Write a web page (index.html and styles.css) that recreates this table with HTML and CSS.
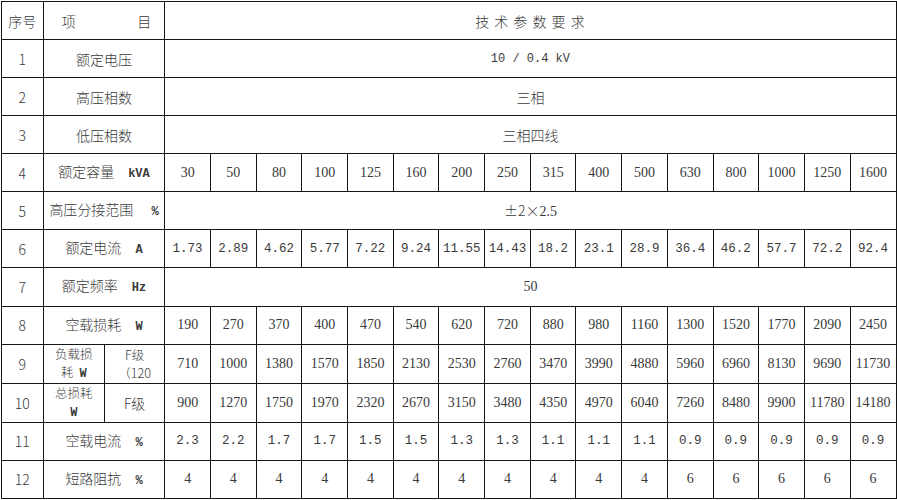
FILE: index.html
```html
<!DOCTYPE html>
<html lang="zh-CN">
<head>
<meta charset="utf-8">
<title>技术参数要求</title>
<link rel="stylesheet" href="styles.css">
</head>
<body>
<table class="spec">
  <colgroup>
    <col class="c-no"><col class="c-item-a"><col class="c-item-b">
    <col class="c-d"><col class="c-d"><col class="c-d"><col class="c-d">
    <col class="c-d"><col class="c-d"><col class="c-d"><col class="c-d">
    <col class="c-d"><col class="c-d"><col class="c-d"><col class="c-d">
    <col class="c-d"><col class="c-d"><col class="c-d"><col class="c-d">
  </colgroup>
  <tbody>
    <tr>
      <td class="no">序号</td>
      <td colspan="2" class="label"><div class="item-head"><span>项</span><span>目</span></div></td>
      <td colspan="16" class="title">技 术 参 数 要 求</td>
    </tr>
    <tr>
      <td class="no">1</td>
      <td colspan="2" class="label">额定电压</td>
      <td colspan="16" class="mono">10 / 0.4 kV</td>
    </tr>
    <tr>
      <td class="no">2</td>
      <td colspan="2" class="label">高压相数</td>
      <td colspan="16" class="cjk">三相</td>
    </tr>
    <tr>
      <td class="no">3</td>
      <td colspan="2" class="label">低压相数</td>
      <td colspan="16" class="cjk">三相四线</td>
    </tr>
    <tr>
      <td class="no">4</td>
      <td colspan="2" class="label">额定容量<span class="u">kVA</span></td>
      <td>30</td><td>50</td><td>80</td><td>100</td><td>125</td><td>160</td><td>200</td><td>250</td>
      <td>315</td><td>400</td><td>500</td><td>630</td><td>800</td><td>1000</td><td>1250</td><td>1600</td>
    </tr>
    <tr>
      <td class="no">5</td>
      <td colspan="2" class="label">高压分接范围<span class="u wide">%</span></td>
      <td colspan="16"><span class="cjk">±2×</span>2.5</td>
    </tr>
    <tr class="mono-row">
      <td class="no">6</td>
      <td colspan="2" class="label">额定电流<span class="u">A</span></td>
      <td>1.73</td><td>2.89</td><td>4.62</td><td>5.77</td><td>7.22</td><td>9.24</td><td>11.55</td><td>14.43</td>
      <td>18.2</td><td>23.1</td><td>28.9</td><td>36.4</td><td>46.2</td><td>57.7</td><td>72.2</td><td>92.4</td>
    </tr>
    <tr>
      <td class="no">7</td>
      <td colspan="2" class="label">额定频率<span class="u">Hz</span></td>
      <td colspan="16">50</td>
    </tr>
    <tr>
      <td class="no">8</td>
      <td colspan="2" class="label">空载损耗<span class="u">W</span></td>
      <td>190</td><td>270</td><td>370</td><td>400</td><td>470</td><td>540</td><td>620</td><td>720</td>
      <td>880</td><td>980</td><td>1160</td><td>1300</td><td>1520</td><td>1770</td><td>2090</td><td>2450</td>
    </tr>
    <tr>
      <td class="no">9</td>
      <td class="label two">负载损<br>耗<span class="m">W</span></td>
      <td class="label two">F级<br>（120</td>
      <td>710</td><td>1000</td><td>1380</td><td>1570</td><td>1850</td><td>2130</td><td>2530</td><td>2760</td>
      <td>3470</td><td>3990</td><td>4880</td><td>5960</td><td>6960</td><td>8130</td><td>9690</td><td>11730</td>
    </tr>
    <tr>
      <td class="no">10</td>
      <td class="label two">总损耗<br><span class="m solo">W</span></td>
      <td class="label">F级</td>
      <td>900</td><td>1270</td><td>1750</td><td>1970</td><td>2320</td><td>2670</td><td>3150</td><td>3480</td>
      <td>4350</td><td>4970</td><td>6040</td><td>7260</td><td>8480</td><td>9900</td><td>11780</td><td>14180</td>
    </tr>
    <tr class="mono-row">
      <td class="no">11</td>
      <td colspan="2" class="label">空载电流<span class="u">%</span></td>
      <td>2.3</td><td>2.2</td><td>1.7</td><td>1.7</td><td>1.5</td><td>1.5</td><td>1.3</td><td>1.3</td>
      <td>1.1</td><td>1.1</td><td>1.1</td><td>0.9</td><td>0.9</td><td>0.9</td><td>0.9</td><td>0.9</td>
    </tr>
    <tr>
      <td class="no">12</td>
      <td colspan="2" class="label">短路阻抗<span class="u">%</span></td>
      <td>4</td><td>4</td><td>4</td><td>4</td><td>4</td><td>4</td><td>4</td><td>4</td>
      <td>4</td><td>4</td><td>4</td><td>6</td><td>6</td><td>6</td><td>6</td><td>6</td>
    </tr>
  </tbody>
</table>
</body>
</html>
```
FILE: styles.css
```css
html, body {
  margin: 0;
  padding: 0;
  background: #ffffff;
}

body {
  padding: 1px 0 0 1px;
}

.spec {
  border-collapse: collapse;
  table-layout: fixed;
  width: 895px;
  height: 498px;
  font-family: "Liberation Serif", "Noto Sans CJK SC", serif;
  font-size: 14px;
  color: #3a3a3a;
}

.c-no { width: 41.7px; }
.c-item-a { width: 61.3px; }
.c-item-b { width: 60.3px; }
.c-d { width: 45.7px; }

.spec tr {
  height: 38px;
}

.spec td {
  border: 1px solid #151515;
  padding: 0;
  text-align: center;
  vertical-align: middle;
  white-space: nowrap;
  overflow: hidden;
  line-height: 18px;
}

.spec td.no,
.spec td.label,
.spec td.title,
.cjk {
  font-family: "Noto Sans CJK SC", sans-serif;
  font-weight: 300;
  font-size: 14px;
}

.spec td.title {
  letter-spacing: 1px;
}

.item-head {
  display: flex;
  justify-content: space-between;
  padding: 0 13px 0 18px;
}

.spec td.mono {
  font-family: "Liberation Mono", monospace;
  font-size: 12px;
}

.mono-row td:nth-child(n+3) {
  font-family: "Liberation Mono", monospace;
  font-size: 12.5px;
}

.u {
  font-family: "Liberation Mono", monospace;
  font-size: 12px;
  font-weight: 700;
  margin-left: 14px;
}

.u.wide {
  margin-left: 18px;
}

.m {
  font-family: "Liberation Mono", monospace;
  font-size: 12px;
  font-weight: 700;
  margin-left: 6px;
}

.m.solo {
  margin-left: 0;
}

.spec td.two {
  font-size: 12.5px;
  line-height: 18px;
}
```
